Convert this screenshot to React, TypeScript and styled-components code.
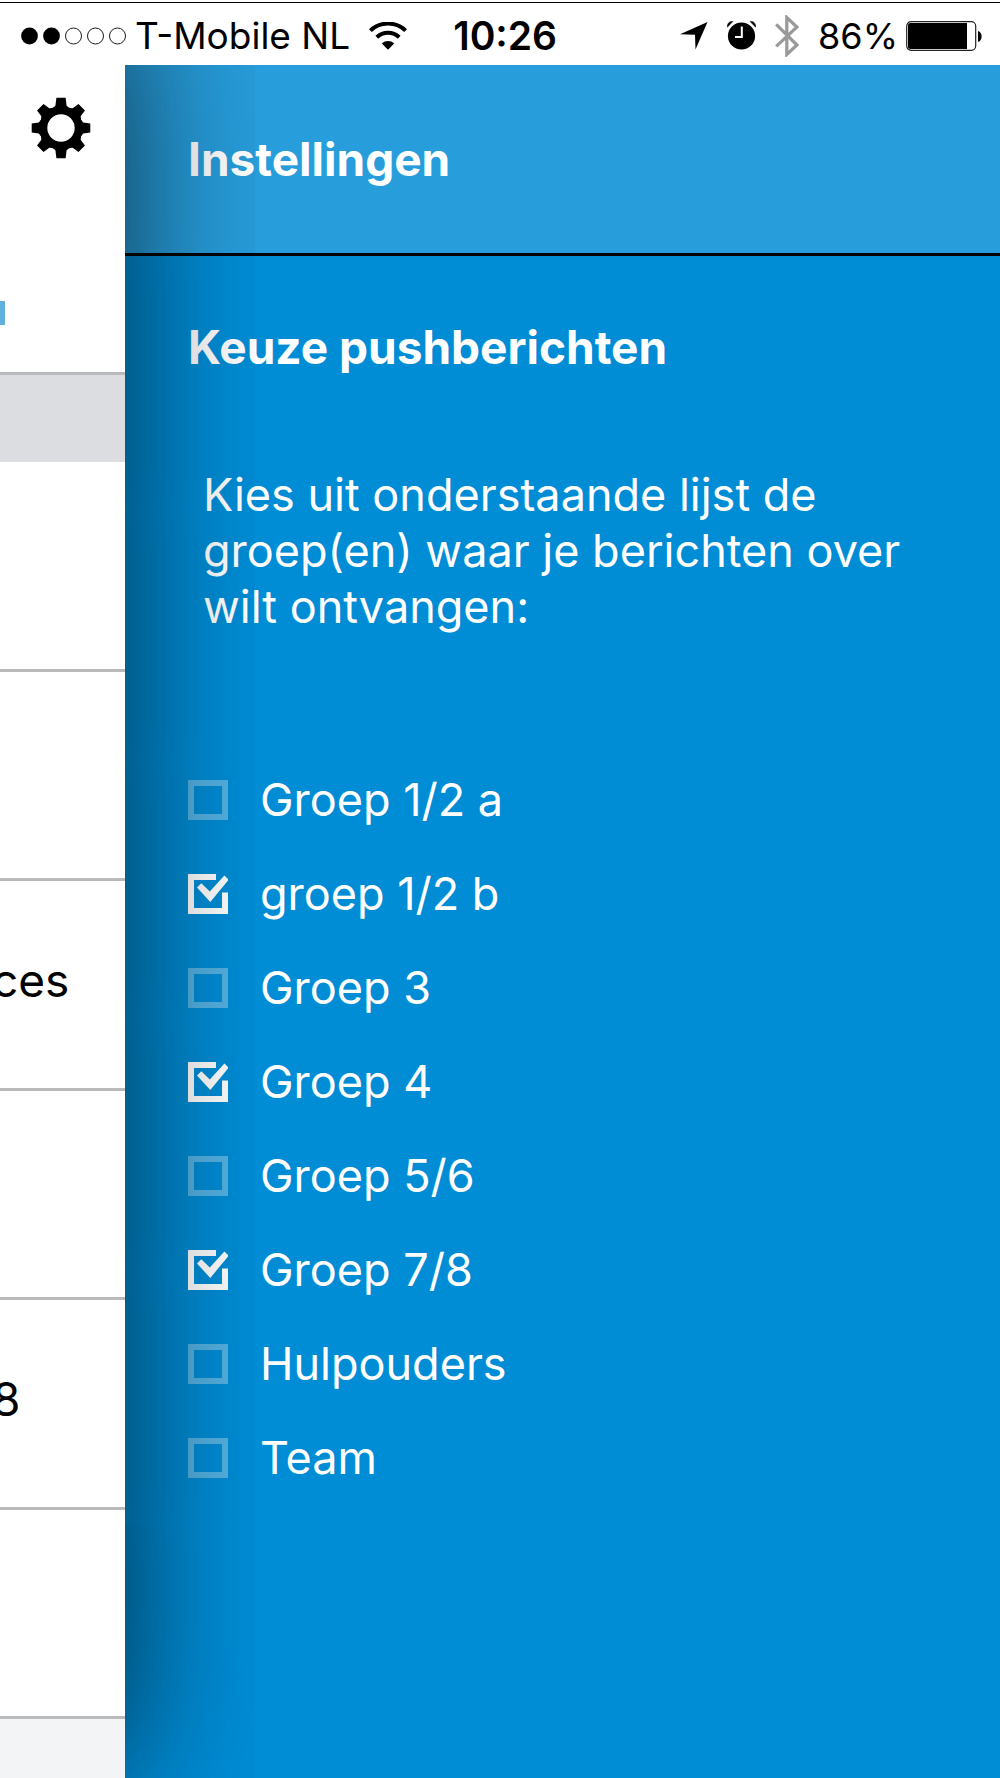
import React, { useState } from "react";
import styled, { createGlobalStyle } from "styled-components";

const GlobalStyle = createGlobalStyle`
  *, *::before { box-sizing: border-box; }
  body {
    margin: 0;
    background: #ffffff;
    font-family: Inter, "Liberation Sans", sans-serif;
  }
`;

const Screen = styled.div`
  display: flex;
  flex-direction: column;
  min-height: 100vh;
  overflow: hidden;
`;

const StatusBar = styled.header`
  position: relative;
  z-index: 2;
  display: flex;
  align-items: center;
  flex: none;
  height: 65px;
  margin: 0;
  padding: 6px 18px 0 21px;
  background: #ffffff;
  color: #000000;
  font-size: 37px;
  line-height: 44px;
  white-space: nowrap;

  &::before {
    content: "";
    position: absolute;
    inset: 2px 0 auto;
    border-top: 1px solid #000000;
  }

  svg {
    display: block;
    flex: none;
  }
`;

const StatusGroup = styled.div<{ $end?: boolean }>`
  display: flex;
  align-items: center;
  gap: ${(p) => (p.$end ? "8px" : "9px")};
  margin-left: ${(p) => (p.$end ? "auto" : "0")};
`;

const Time = styled.time`
  margin-left: 46px;
  font-size: 39px;
  font-weight: 600;
`;

const Carrier = styled.span`
  margin-right: 10px;
`;

const Indicators = styled.div`
  display: flex;
  align-items: center;
  gap: 19px;
  font-size: 36px;
`;

const Body = styled.div`
  display: flex;
  flex: 1;
`;

const PageEdge = styled.section`
  position: relative;
  z-index: 1;
  display: flex;
  flex-direction: column;
  flex: none;
  width: 125px;
  background: #ffffff;

  &::before {
    content: "";
    position: absolute;
    z-index: -1;
    inset: -65px 0 0 -200px;
    background: #ffffff;
    box-shadow: 0 0 150px rgba(0, 0, 0, 0.7);
  }
`;

const PageTop = styled.div`
  display: flex;
  flex-direction: column;
  flex: none;
  height: 310px;
  padding-top: 32px;
  border-bottom: 3px solid #b8babb;
`;

const GearButton = styled.button`
  display: block;
  width: 60px;
  height: 62px;
  margin: 0 0 142px 31px;
  padding: 0;
  border: 0;
  background: none;
  cursor: pointer;
`;

const TitleEdge = styled.div`
  width: 5px;
  height: 24px;
  background: #5fb0dc;
`;

const SectionBand = styled.div`
  flex: none;
  height: 87px;
  background: #dcdde1;
`;

const PageList = styled.ul`
  display: flex;
  flex: 1;
  flex-direction: column;
  margin: 0;
  padding: 0;
  list-style: none;
`;

const PageRow = styled.li`
  display: flex;
  align-items: center;
  flex: 1;
  overflow: hidden;
  padding-bottom: 8px;
  border-bottom: 3px solid #b8babb;
  font-size: 46px;
  line-height: 56px;

  span {
    margin-left: -8px;
  }
`;

const PageFooter = styled.div`
  flex: none;
  height: 59px;
  background: #f3f4f6;
`;

const Panel = styled.main`
  flex: 1;
  min-width: 0;
  background: #008dd6;
  color: #ffffff;
  font-size: 45px;
  line-height: 56px;
`;

const PanelHeader = styled.div`
  padding: 66px 63px;
  border-bottom: 3px solid #000000;
  background: #279ddb;
`;

const Heading = styled.h1`
  margin: 0;
  font-size: 46px;
  font-weight: 700;
  line-height: 56px;
`;

const Form = styled.form`
  padding: 63px;
`;

const Intro = styled.p`
  margin: 92px 0 118px;
  padding-left: 15px;
`;

const Options = styled.ul`
  margin: 0;
  padding: 0;
  list-style: none;
`;

const Option = styled.label`
  display: flex;
  align-items: center;
  gap: 32px;
  height: 94px;
  cursor: pointer;
`;

const Tick = styled.span`
  display: grid;
  flex: none;

  input, svg {
    grid-area: 1 / 1;
    width: 40px;
    height: 40px;
    margin: 0;
  }

  input {
    appearance: none;
    border: 6px solid rgba(255, 255, 255, 0.33);
    cursor: pointer;
  }

  svg {
    visibility: hidden;
    pointer-events: none;
  }

  input:checked { border-color: transparent; }
  input:checked + svg { visibility: visible; }
`;

const groups = [
  { name: "Groep 1/2 a", on: false },
  { name: "groep 1/2 b", on: true },
  { name: "Groep 3", on: false },
  { name: "Groep 4", on: true },
  { name: "Groep 5/6", on: false },
  { name: "Groep 7/8", on: true },
  { name: "Hulpouders", on: false },
  { name: "Team", on: false },
];

const rows = ["", "", "ces", "", "8", ""];

const Signal = () => (
  <svg width="105" height="18" viewBox="0 0 105 18" role="img" aria-label="Signaal">
    {[0, 1, 2, 3, 4].map((i) => (
      <circle key={i} cx={8.5 + i * 22} cy="9" r={i < 2 ? 8.4 : 8} fill={i < 2 ? "#000" : "none"} stroke={i < 2 ? "none" : "#000"} strokeWidth="0.9" />
    ))}
  </svg>
);

const Wifi = () => (
  <svg width="38" height="28" viewBox="0 0 38 28" role="img" aria-label="Wifi">
    <g fill="none" stroke="#000" strokeWidth="4">
      <path d="M1.4 8.6 A25.5 25.5 0 0 1 36.6 8.6" />
      <path d="M7.8 15.2 A16.3 16.3 0 0 1 30.2 15.2" />
    </g>
    <path d="M12.8 21.4 A9 9 0 0 1 25.2 21.4 L19 27.8 Z" />
  </svg>
);

const Location = () => (
  <svg width="28" height="28" viewBox="0 0 28 28" role="img" aria-label="Locatie">
    <path d="M27.5 0 L15.5 27.6 L15 12.8 L0 12.3 Z" />
  </svg>
);

const Alarm = () => (
  <svg width="29" height="29" viewBox="0 0 29 29" role="img" aria-label="Wekker">
    <circle cx="14.5" cy="15" r="13.6" />
    <path d="M0.3 6.2 C0.3 2.2 2.6 0.2 5.8 0.6 Z M28.7 6.2 C28.7 2.2 26.4 0.2 23.2 0.6 Z" stroke="#000" strokeWidth="0.6" />
    <path d="M14.8 5.5 V16 H8" fill="none" stroke="#fff" strokeWidth="2" />
  </svg>
);

const Bluetooth = () => (
  <svg width="24" height="42" viewBox="0 0 24 42" role="img" aria-label="Bluetooth">
    <path d="M1.2 9.4 L22 30 L11.8 39.5 V2.5 L22 12 L1.2 31.4" fill="none" stroke="#999" strokeWidth="3.2" />
  </svg>
);

const Battery = () => (
  <svg width="76" height="30" viewBox="0 0 76 30" role="img" aria-label="Batterij">
    <rect x="0.7" y="0.7" width="69" height="28.6" rx="4.5" fill="none" stroke="#222" strokeWidth="1.2" />
    <path d="M4.5 2 H61 V28 H4.5 Q2 28 2 25.5 V4.5 Q2 2 4.5 2 Z" />
    <path d="M72 10 C76.8 10.8 76.8 20.2 72 21 Z" />
  </svg>
);

const Gear = () => (
  <svg width="60" height="62" viewBox="-30 -31 60 62" aria-hidden="true">
    <circle r="17.6" fill="none" stroke="#000" strokeWidth="7.8" />
    {[0, 45, 90, 135, 180, 225, 270, 315].map((a) => (
      <path
        key={a}
        transform={`rotate(${a})`}
        d={`M-4.6 ${a % 180 ? -29.3 : -30.3} H4.6 L5.6 -22.2 L9 -19.5 L4 -16 H-4 L-9 -19.5 L-5.6 -22.2 Z`}
      />
    ))}
  </svg>
);

const CheckMark = () => (
  <svg viewBox="0 0 40 40" fill="#fff" aria-hidden="true">
    <path d="M0 0 H28 V6 H6 V34 H34 V18.5 H40 V40 H0 Z" />
    <path d="M9 13.5 L13.3 9.3 L21.8 17.6 L36.4 1.5 L40 5 V6.4 L22.3 28 Z" />
  </svg>
);

export default function App() {
  const [chosen, setChosen] = useState(groups.map((g) => g.on));
  const toggle = (i: number) => setChosen(chosen.map((on, n) => (n === i ? !on : on)));

  return (
    <>
      <GlobalStyle />
      <Screen>
        <StatusBar>
          <StatusGroup>
            <Signal />
            <Carrier>T-Mobile NL</Carrier>
            <Wifi />
          </StatusGroup>
          <Time>10:26</Time>
          <StatusGroup $end>
            <Indicators>
              <Location />
              <Alarm />
              <Bluetooth />
              <span>86%</span>
            </Indicators>
            <Battery />
          </StatusGroup>
        </StatusBar>
        <Body>
          <PageEdge>
            <PageTop>
              <GearButton type="button" aria-label="Instellingen">
                <Gear />
              </GearButton>
              <TitleEdge />
            </PageTop>
            <SectionBand />
            <PageList>
              {rows.map((text, i) => (
                <PageRow key={i}>{text && <span>{text}</span>}</PageRow>
              ))}
            </PageList>
            <PageFooter />
          </PageEdge>
          <Panel>
            <PanelHeader>
              <Heading>Instellingen</Heading>
            </PanelHeader>
            <Form>
              <Heading as="h2">Keuze pushberichten</Heading>
              <Intro>Kies uit onderstaande lijst de groep(en) waar je berichten over wilt ontvangen:</Intro>
              <Options>
                {groups.map((g, i) => (
                  <li key={g.name}>
                    <Option>
                      <Tick>
                        <input type="checkbox" checked={chosen[i]} onChange={() => toggle(i)} />
                        <CheckMark />
                      </Tick>
                      {g.name}
                    </Option>
                  </li>
                ))}
              </Options>
            </Form>
          </Panel>
        </Body>
      </Screen>
    </>
  );
}
